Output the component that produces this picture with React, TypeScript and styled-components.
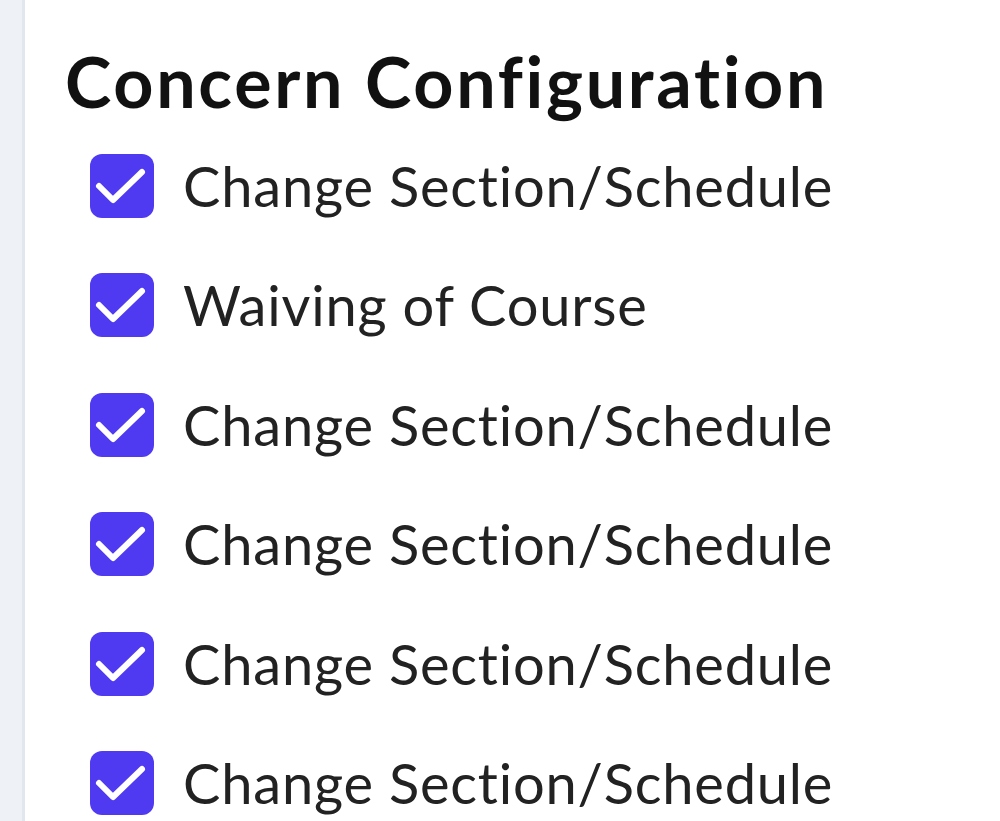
import React from 'react'
import styled, { createGlobalStyle } from 'styled-components'

const GlobalStyle = createGlobalStyle`
  html, body {
    margin: 0;
    padding: 0;
    background: #ffffff;
  }
  body {
    font-family: Lato, "Noto Sans", sans-serif;
    color: #1f1f1f;
  }
`

const Page = styled.div`
  display: flex;
  min-height: 821px;
  overflow: hidden;
`

const SideStrip = styled.div`
  width: 22px;
  flex-shrink: 0;
  background: #eef1f6;
  border-right: 3px solid #e2e6ed;
`

const Main = styled.main`
  flex: 1;
  padding: 39px 0 0 40px;
`

const Title = styled.h1`
  margin: 0 0 31px 0;
  font-family: Lato, sans-serif;
  font-weight: 700;
  font-size: 70px;
  line-height: 84px;
  color: #111111;
  letter-spacing: 2.7px;
`

const List = styled.ul`
  list-style: none;
  margin: 0;
  padding: 0 0 0 25px;
  display: flex;
  flex-direction: column;
  gap: 55.4px;
`

const Item = styled.li`
  display: flex;
  align-items: center;
  gap: 29px;
  height: 64px;
`

const Box = styled.span<{ $checked: boolean }>`
  width: 64px;
  height: 64px;
  border-radius: 12px;
  flex-shrink: 0;
  background: ${(p) => (p.$checked ? '#4f3af2' : '#ffffff')};
  border: ${(p) => (p.$checked ? 'none' : '3px solid #c7c9d1')};
  display: flex;
`

const Label = styled.span`
  font-size: 56px;
  line-height: 64px;
  color: #222222;
  letter-spacing: 0.8px;
`

const concerns = [
  'Change Section/Schedule',
  'Waiving of Course',
  'Change Section/Schedule',
  'Change Section/Schedule',
  'Change Section/Schedule',
  'Change Section/Schedule',
]

const Check = () => (
  <svg width="64" height="64" viewBox="0 0 64 64" fill="none">
    <path d="M9 32L23 46L52 18" stroke="#ffffff" strokeWidth="6" strokeLinecap="round" strokeLinejoin="round" />
  </svg>
)

export default function App() {
  return (
    <Page>
      <GlobalStyle />
      <SideStrip />
      <Main>
        <Title>Concern Configuration</Title>
        <List>
          {concerns.map((c, i) => (
            <Item key={i}>
              <Box $checked>
                <Check />
              </Box>
              <Label>{c}</Label>
            </Item>
          ))}
        </List>
      </Main>
    </Page>
  )
}
